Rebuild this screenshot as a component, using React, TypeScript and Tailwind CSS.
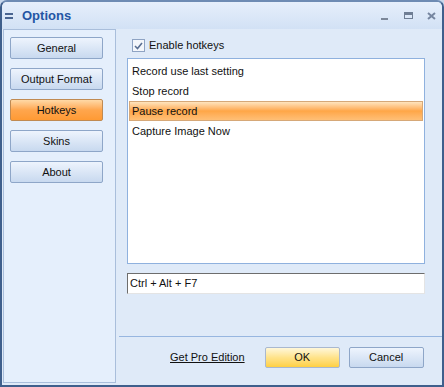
import React from "react";

const font = { fontFamily: '"Liberation Sans", Arial, sans-serif' };

function SideButton({ label, active }: { label: string; active?: boolean }) {
  return (
    <div
      className={
        active
          ? "h-[22px] w-[93px] flex items-center justify-center rounded-[2px] border border-[#c08a52] bg-gradient-to-b from-[#ffd9a6] via-[#ffa64d] to-[#ff9a33] text-[11px] text-[#111]"
          : "h-[22px] w-[93px] flex items-center justify-center rounded-[2px] border border-[#8ea6c8] bg-gradient-to-b from-[#eef4fd] to-[#c8d9ef] text-[11px] text-[#111]"
      }
    >
      {label}
    </div>
  );
}

export default function App() {
  const items = ["Record use last setting", "Stop record", "Pause record", "Capture Image Now"];
  return (
    <div style={font} className="w-[444px] h-[387px] bg-[#c9d8ec]">
      <div className="w-[444px] h-[387px] flex flex-col rounded-t-[7px] border-2 border-t-[#6e8bb3] border-x-[#3f5f8c] border-b-[#3f5f8c] bg-[#dfeaf8] overflow-hidden">
        {/* title bar */}
        <div className="h-[27px] shrink-0 flex items-center bg-gradient-to-b from-[#e6effb] to-[#d2e1f5]">
          <div className="ml-[3px] w-[8px] flex flex-col gap-[2px]">
            <div className="h-[2px] bg-[#4a6591]" />
            <div className="h-[2px] bg-[#4a6591]" />
          </div>
          <span className="ml-[9px] text-[13px] font-bold text-[#2456a4]">Options</span>
          <div className="ml-auto flex items-center">
            <div className="w-[7px] h-[2px] bg-[#7b8799] mt-[6px]" />
            <div className="ml-[16px] w-[9px] h-[7px] border border-[#6f7e94] border-t-[3px]" />
            <svg className="ml-[14px] mr-[6px]" width="9" height="8" viewBox="0 0 9 8">
              <path d="M1 1 L8 7 M8 1 L1 7" stroke="#7686a0" strokeWidth="2" />
            </svg>
          </div>
        </div>
        <div className="flex flex-1">
          {/* left panel */}
          <div className="ml-px mb-[2px] w-[113px] shrink-0 border border-[#a9bedb] bg-[#e5effc] pl-[6px] pt-[7px] flex flex-col gap-[9px]">
            <SideButton label="General" />
            <SideButton label="Output Format" />
            <SideButton label="Hotkeys" active />
            <SideButton label="Skins" />
            <SideButton label="About" />
          </div>
          {/* content */}
          <div className="flex-1 flex flex-col">
            <div className="mt-[10px] ml-[16px] flex items-center gap-[4px] h-[13px]">
              <div className="w-[13px] h-[13px] border border-[#8ea3c3] bg-[#f3f6fb] flex items-center justify-center">
                <svg width="9" height="8" viewBox="0 0 9 8">
                  <path d="M1 4 L3.5 6.5 L8 1" stroke="#5a6f92" strokeWidth="1.6" fill="none" />
                </svg>
              </div>
              <span className="text-[11px] text-[#111]">Enable hotkeys</span>
            </div>
            <div className="mt-[6px] ml-[11px] w-[298px] h-[206px] border border-[#8fb1de] bg-white pt-[2px] px-[1px]">
              {items.map((t) =>
                t === "Pause record" ? (
                  <div
                    key={t}
                    className="h-[20px] flex items-center pl-[2px] border border-[#d6a878] bg-gradient-to-b from-[#ffe4bd] via-[#ffa646] to-[#ffbf76] text-[11px] text-[#111]"
                  >
                    {t}
                  </div>
                ) : (
                  <div key={t} className="h-[20px] flex items-center pl-[3px] text-[11px] text-[#111]">
                    {t}
                  </div>
                )
              )}
            </div>
            <div className="mt-[9px] ml-[11px] w-[298px] h-[21px] border border-t-[#6d6d6d] border-l-[#6d6d6d] border-r-[#e4e4e4] border-b-[#e4e4e4] bg-white flex items-center pl-[2px] text-[11px] text-[#111]">
              Ctrl + Alt + F7
            </div>
            <div className="mt-[42px] ml-[3px] h-px bg-[#97b6e0]" />
            <div className="mt-[10px] flex items-center">
              <span className="ml-[54px] text-[11px] text-[#111] underline">Get Pro Edition</span>
              <div className="ml-[20px] w-[75px] h-[21px] rounded-[2px] border border-[#a9b8cf] bg-gradient-to-b from-[#fff7d9] via-[#ffe38a] to-[#ffd040] flex items-center justify-center text-[11px] text-[#111]">
                OK
              </div>
              <div className="ml-[9px] w-[75px] h-[21px] rounded-[2px] border border-[#8ea6c8] bg-gradient-to-b from-[#eef4fd] to-[#c8d9ef] flex items-center justify-center text-[11px] text-[#111]">
                Cancel
              </div>
            </div>
          </div>
        </div>
      </div>
    </div>
  );
}
